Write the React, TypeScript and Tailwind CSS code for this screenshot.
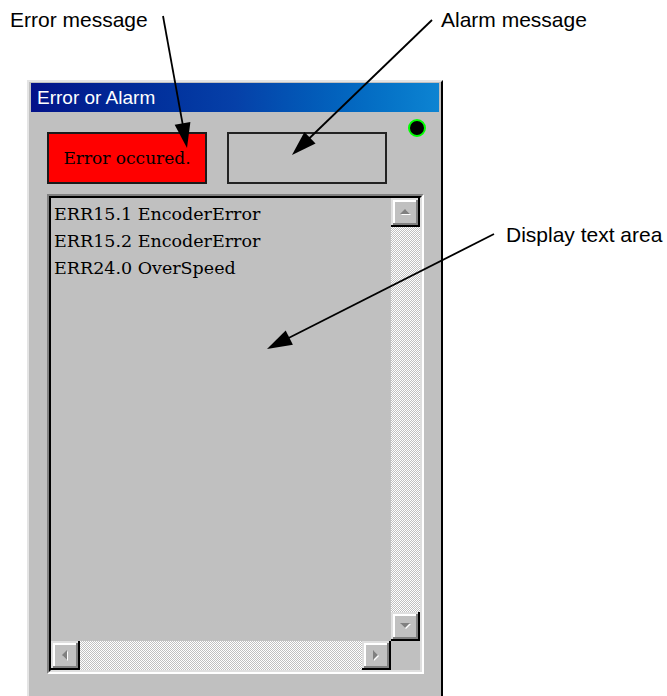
import React from "react";

type Pt = [number, number];

function Arrow({ from, to }: { from: Pt; to: Pt }) {
  const [x1, y1] = from;
  const [x2, y2] = to;
  const dx = x2 - x1;
  const dy = y2 - y1;
  const len = Math.hypot(dx, dy);
  const ux = dx / len;
  const uy = dy / len;
  const L = 25;
  const W = 8;
  const bx = x2 - ux * L;
  const by = y2 - uy * L;
  const px = -uy;
  const py = ux;
  const pts = `${x2},${y2} ${bx + px * W},${by + py * W} ${bx - px * W},${by - py * W}`;
  return (
    <g>
      <line x1={x1} y1={y1} x2={bx + ux * 3} y2={by + uy * 3} stroke="#000" strokeWidth={1.8} />
      <polygon points={pts} fill="#000" />
    </g>
  );
}

const btn =
  "bg-[#c0c0c0] flex items-center justify-center shadow-[inset_-2px_-2px_0_#000,inset_2px_2px_0_#dfdfdf,inset_-4px_-4px_0_#808080,inset_4px_4px_0_#ffffff]";

const track =
  "[background:repeating-conic-gradient(#c0c0c0_0%_25%,#ffffff_0%_50%)_0_0/2px_2px]";

function Tri({ dir }: { dir: "up" | "down" | "left" | "right" }) {
  const shapes: Record<string, [string, string]> = {
    up: ["1,6 6,1 11,6", "2,7 7,2 12,7"],
    down: ["1,1 11,1 6,6", "2,2 12,2 7,7"],
    left: ["6,1 6,11 1,6", "7,2 7,12 2,7"],
    right: ["1,1 1,11 6,6", "2,2 2,12 7,7"],
  };
  const [g, w] = shapes[dir];
  const horiz = dir === "up" || dir === "down";
  return (
    <svg width={horiz ? 14 : 9} height={horiz ? 9 : 14}>
      <polygon points={w} fill="#ffffff" />
      <polygon points={g} fill="#808080" />
    </svg>
  );
}

export default function App() {
  const lines = ["ERR15.1 EncoderError", "ERR15.2 EncoderError", "ERR24.0 OverSpeed"];
  return (
    <div
      className="relative w-[667px] h-[696px] overflow-hidden bg-white"
      style={{ fontFamily: '"Liberation Sans", Arial, sans-serif' }}
    >
      <div className="pl-[27px] pt-[80px]">
        <div className="w-[416px] h-[640px] bg-[#c0c0c0] border-2 border-t-[#e4e4e4] border-l-[#e4e4e4] border-r-black border-b-black px-[2px] pt-[1px]">
          <div className="h-[29px] bg-linear-to-r from-[#031189] via-[#0640a8] to-[#0d84d2] flex items-center pl-[6px]">
            <span className="text-white text-[19px] leading-none">Error or Alarm</span>
          </div>
          <div className="pl-[16px] pt-[7px]">
            <div className="flex items-start">
              <div
                className="mt-[13px] w-[160px] h-[52px] border-2 border-[#1a1a1a] bg-[#ff0000] flex items-center justify-center text-black text-[17px] leading-none"
                style={{ fontFamily: '"DejaVu Serif", "Liberation Serif", serif' }}
              >
                Error occured.
              </div>
              <div className="mt-[13px] ml-[20px] w-[160px] h-[52px] border-2 border-[#222222]" />
              <div className="ml-[21px] w-[18px] h-[18px] rounded-full bg-black border-2 border-[#00ff00]" />
            </div>
            <div className="mt-[10px] w-[377px] h-[480px] border-2 border-t-[#808080] border-l-[#808080] border-r-white border-b-white">
              <div className="w-full h-full border-2 border-t-black border-l-black border-r-[#dfdfdf] border-b-[#dfdfdf] bg-[#c0c0c0] grid grid-cols-[1fr_29px] grid-rows-[1fr_29px]">
                <div
                  className="pl-[3px] pt-[3px] text-black text-[17.5px] leading-[27px] overflow-hidden"
                  style={{ fontFamily: '"DejaVu Serif", "Liberation Serif", serif' }}
                >
                  {lines.map((l) => (
                    <div key={l} className="whitespace-nowrap">
                      {l}
                    </div>
                  ))}
                </div>
                <div className="flex flex-col">
                  <div className={`${btn} h-[29px]`}>
                    <Tri dir="up" />
                  </div>
                  <div className={`flex-1 ${track}`} />
                  <div className={`${btn} h-[29px]`}>
                    <Tri dir="down" />
                  </div>
                </div>
                <div className="flex">
                  <div className={`${btn} w-[29px]`}>
                    <Tri dir="left" />
                  </div>
                  <div className={`flex-1 ${track}`} />
                  <div className={`${btn} w-[29px]`}>
                    <Tri dir="right" />
                  </div>
                </div>
                <div className="bg-[#c0c0c0]" />
              </div>
            </div>
          </div>
        </div>
      </div>

      <div className="absolute left-[10px] top-[9px] text-[21px] leading-none text-black">Error message</div>
      <div className="absolute left-[441px] top-[9px] text-[21px] leading-none text-black">Alarm message</div>
      <div className="absolute left-[506px] top-[224px] text-[21px] leading-none text-black">Display text area</div>

      <svg className="absolute left-0 top-0 pointer-events-none" width={667} height={696}>
        <Arrow from={[163, 16]} to={[187, 148]} />
        <Arrow from={[432, 20]} to={[292, 155]} />
        <Arrow from={[494, 234]} to={[267, 349]} />
      </svg>
    </div>
  );
}
